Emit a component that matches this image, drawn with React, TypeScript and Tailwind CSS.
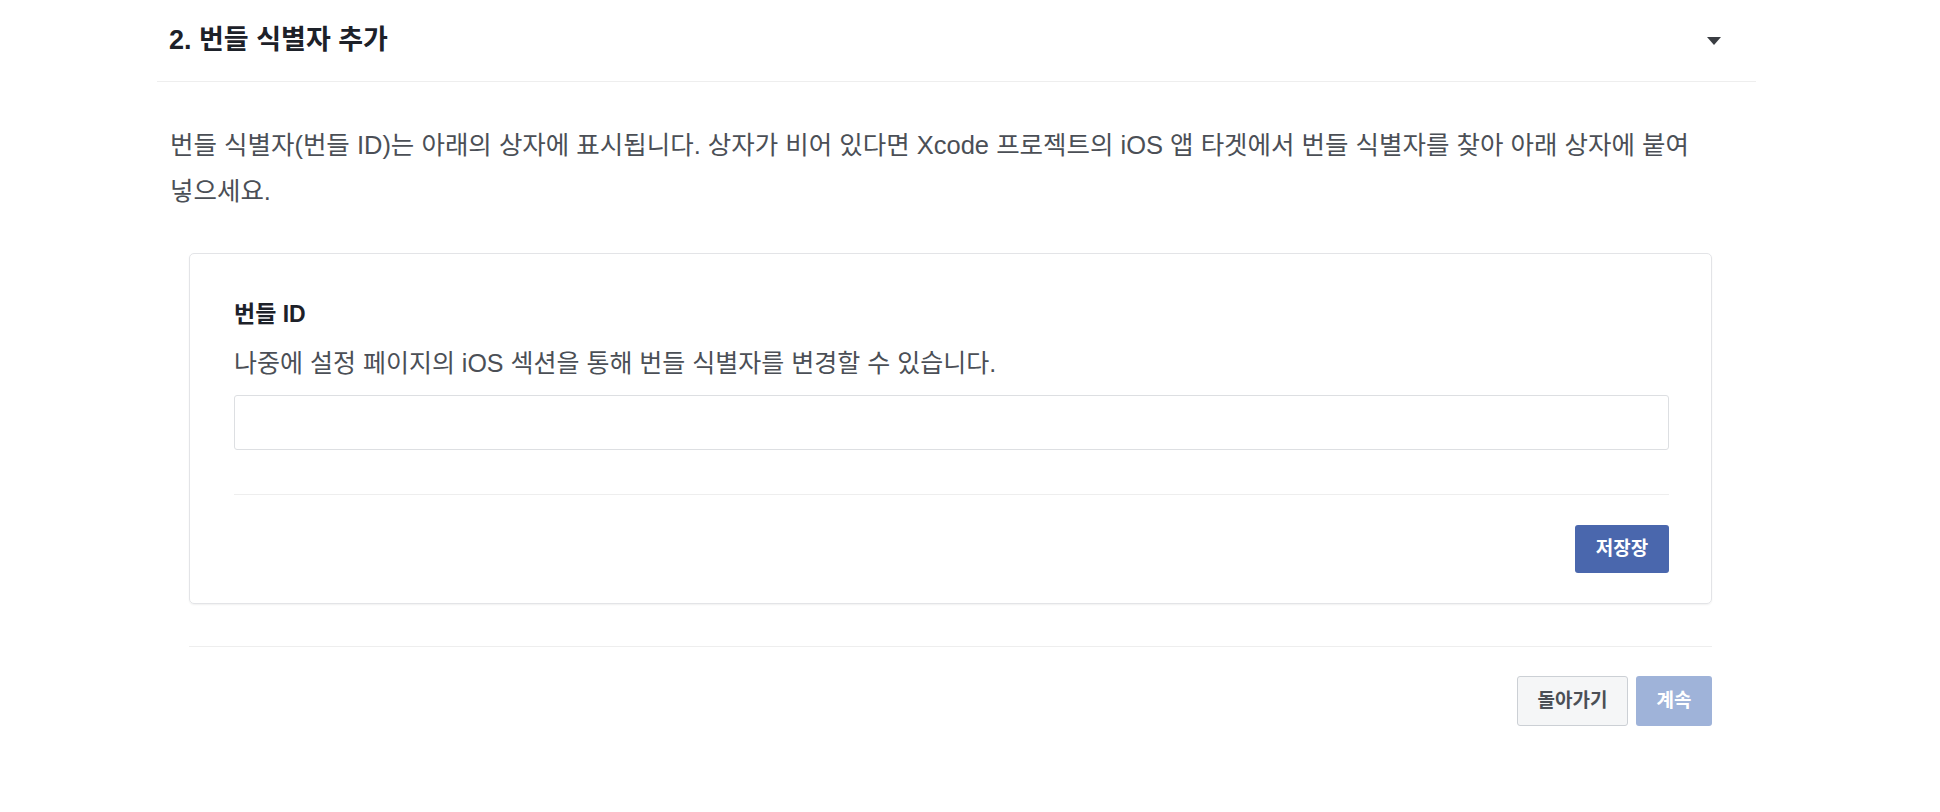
export default function App() {
  return (
    <div className="w-[1940px] h-[812px] bg-white font-['Liberation_Sans','Noto_Sans_CJK_KR',sans-serif] text-[#4b4f56]">
      <div className="ml-[157px] w-[1599px]">
        <div className="h-[82px] border-b border-[#eeeeee] flex items-center justify-between pl-[12px] pr-[35px]">
          <h2 className="text-[27px] font-bold text-[#1d2129]">2. 번들 식별자 추가</h2>
          <svg width="14" height="8" viewBox="0 0 14 8" aria-hidden="true">
            <polygon points="0,0 14,0 7,8" fill="#3a3d42" />
          </svg>
        </div>
        <p className="mt-[40px] pl-[13px] pr-[35px] text-[25.5px] leading-[46px] break-keep">
          번들 식별자(번들 ID)는 아래의 상자에 표시됩니다. 상자가 비어 있다면 Xcode 프로젝트의 iOS 앱 타겟에서 번들 식별자를 찾아 아래 상자에 붙여 넣으세요.
        </p>
        <div className="pl-[32px] pr-[44px]">
          <div className="mt-[39px] border border-[#e3e4e7] rounded-[5px] shadow-[0_1px_2px_rgba(0,0,0,0.06)] pl-[44px] pr-[42px] pt-[45px] pb-[30px]">
            <div className="text-[23px] font-bold leading-[30px] text-[#1d2129]">번들 ID</div>
            <div className="mt-[17px] text-[25px] leading-[34px]">
              나중에 설정 페이지의 iOS 섹션을 통해 번들 식별자를 변경할 수 있습니다.
            </div>
            <input
              type="text"
              className="mt-[15px] block h-[55px] w-full border border-[#dddfe2] rounded-[3px] outline-none px-3"
            />
            <div className="mt-[44px] border-t border-[#eeeeee]" />
            <div className="mt-[30px] flex justify-end">
              <button className="w-[94px] h-[48px] bg-[#4a67ad] rounded-[3px] text-white text-[19px] font-bold">
                저장장
              </button>
            </div>
          </div>
          <div className="mt-[42px] border-t border-[#eeeeee]" />
          <div className="mt-[29px] flex justify-end gap-[8px]">
            <button className="w-[111px] h-[50px] bg-[#f5f6f7] border border-[#ccd0d5] rounded-[3px] text-[#4b4f56] text-[19px] font-bold">
              돌아가기
            </button>
            <button className="w-[76px] h-[50px] bg-[#9fb3d9] rounded-[3px] text-white text-[19px] font-bold">
              계속
            </button>
          </div>
        </div>
      </div>
    </div>
  );
}
